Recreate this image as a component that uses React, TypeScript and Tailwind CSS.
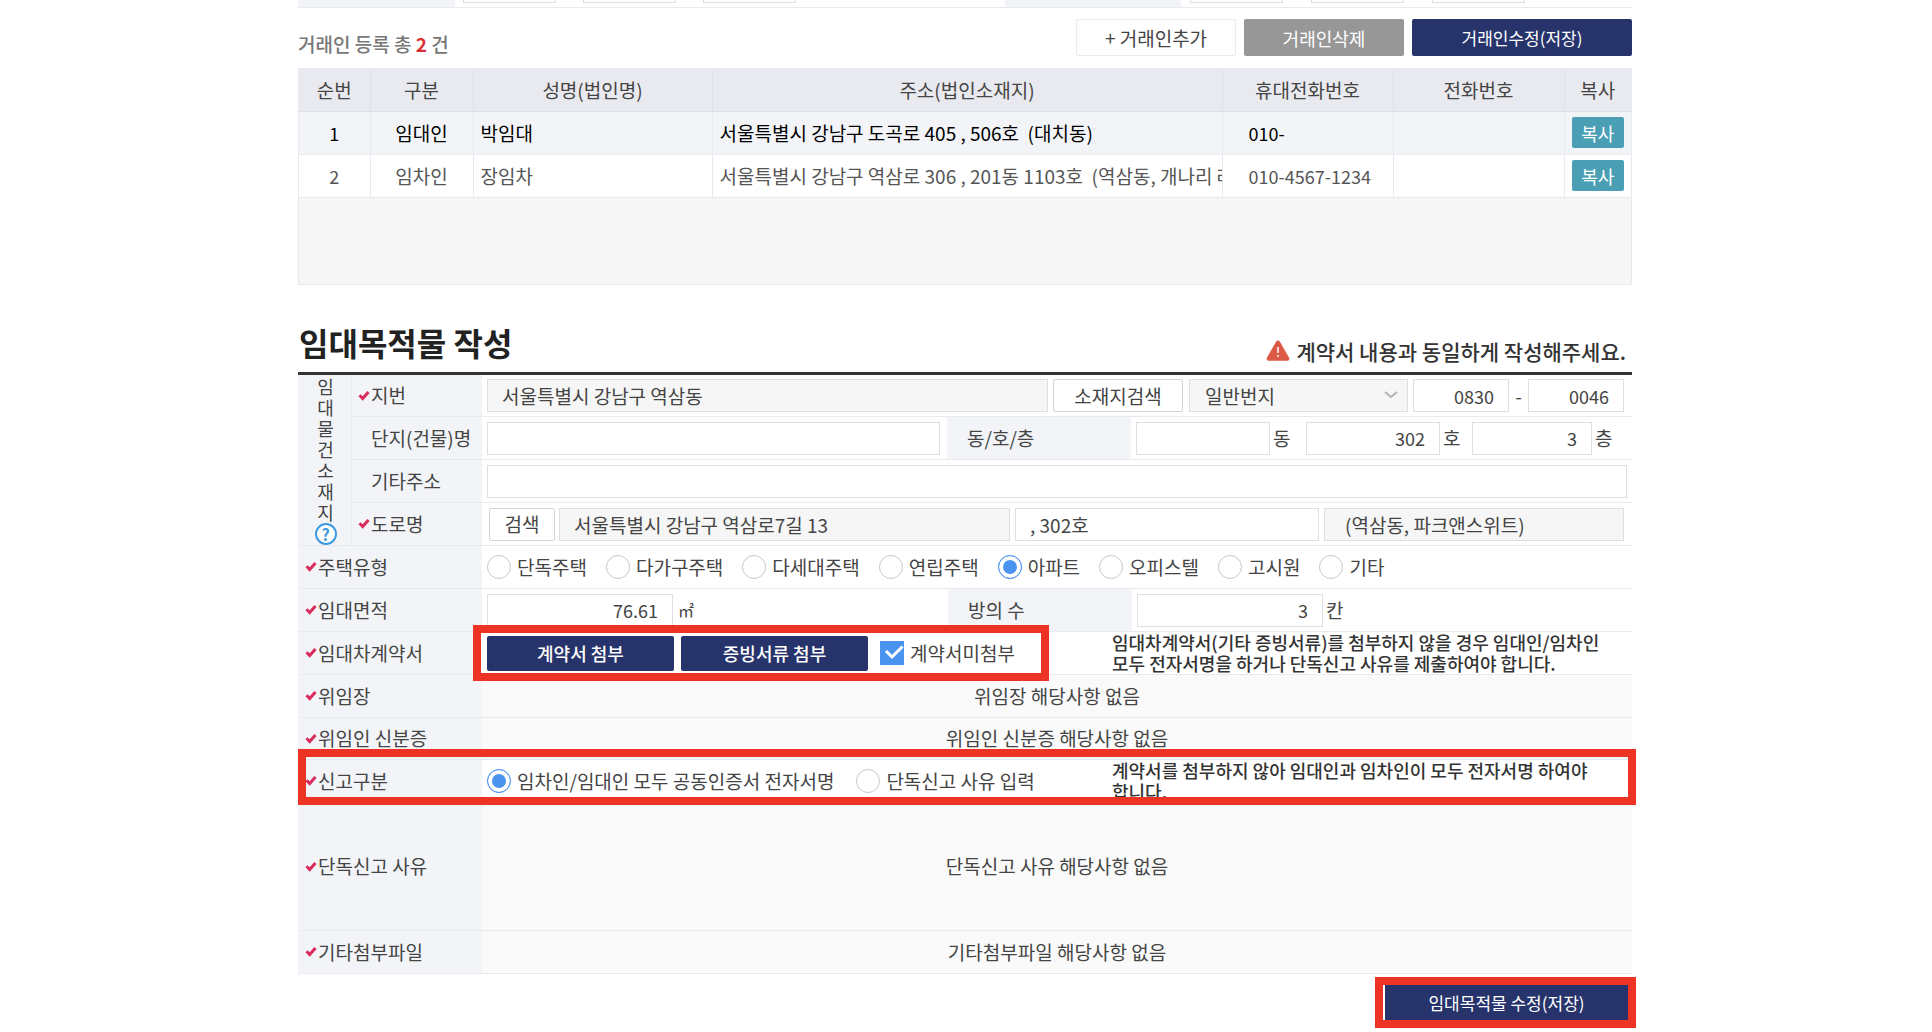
import { useState } from "react";
import type { InputHTMLAttributes, ReactNode } from "react";

interface Party {
  no: number;
  role: string;
  name: string;
  address: string;
  mobile: string;
  phone: string;
}

const parties: Party[] = [
  {
    no: 1,
    role: "임대인",
    name: "박임대",
    address: "서울특별시 강남구 도곡로 405 , 506호  (대치동)",
    mobile: "010-",
    phone: "",
  },
  {
    no: 2,
    role: "임차인",
    name: "장임차",
    address: "서울특별시 강남구 역삼로 306 , 201동 1103호  (역삼동, 개나리 래미안)",
    mobile: "010-4567-1234",
    phone: "",
  },
];

const houseTypes = [
  "단독주택",
  "다가구주택",
  "다세대주택",
  "연립주택",
  "아파트",
  "오피스텔",
  "고시원",
  "기타",
];

const Check = () => (
  <svg viewBox="0 0 12 11" className="h-[11px] w-3 shrink-0" aria-hidden="true">
    <path
      d="M1.5 5.2 4.7 8.5 10.5 2"
      fill="none"
      stroke="#d92b5c"
      strokeWidth="3"
    />
  </svg>
);

const Box = ({
  className = "",
  ...rest
}: InputHTMLAttributes<HTMLInputElement>) => (
  <input
    type="text"
    className={`h-[33px] min-w-0 border border-[#dfdfdf] px-3.5 outline-none ${
      rest.readOnly ? "bg-[#f6f6f6]" : "bg-white"
    } ${className}`}
    {...rest}
  />
);

interface RowProps {
  label: string;
  htmlFor?: string;
  required?: boolean;
  inner?: boolean;
  height?: string;
  muted?: boolean;
  children: ReactNode;
}

const Row = ({
  label,
  htmlFor,
  required = true,
  inner = false,
  height = "h-[43px]",
  muted = false,
  children,
}: RowProps) => (
  <div className={`flex border-b border-[#e9eaef] ${height}`}>
    <div
      className={`flex shrink-0 items-center gap-px bg-[#f2f4f8] pb-px ${
        inner ? "w-[130px] pl-1.5" : "w-[184px] pl-[7px]"
      }`}
    >
      {required ? <Check /> : <span className="w-3 shrink-0" />}
      <label htmlFor={htmlFor} className="whitespace-nowrap">
        {label}
      </label>
    </div>
    <div
      className={`flex min-w-0 flex-1 items-center pl-[5px] ${
        muted ? "bg-[#fafafa] pb-px" : "bg-white"
      }`}
    >
      {children}
    </div>
  </div>
);

const Empty = ({ text }: { text: string }) => (
  <p className="flex-1 pr-[5px] text-center">{text}</p>
);

const SubLabel = ({ text, htmlFor }: { text: string; htmlFor: string }) => (
  <label
    htmlFor={htmlFor}
    className="flex w-[184px] shrink-0 items-center self-stretch bg-[#f2f4f8] pl-5"
  >
    {text}
  </label>
);

interface RadioProps {
  name: string;
  label: string;
  checked: boolean;
  onChange: () => void;
}

const Radio = ({ name, label, checked, onChange }: RadioProps) => (
  <label className="flex items-center gap-1.5 whitespace-nowrap">
    <input
      type="radio"
      name={name}
      checked={checked}
      onChange={onChange}
      className="size-6 shrink-0 appearance-none rounded-full border border-[#c8c8c8] bg-white checked:border-[#4a94f0] checked:bg-[#4a94f0] checked:shadow-[inset_0_0_0_4px_white]"
    />
    {label}
  </label>
);

const TopRow = () => (
  <div className="flex h-2 items-start border-b border-[#e9eaef]">
    <div className="h-[7px] w-[157px] bg-[#f2f4f8]" />
    <div className="flex flex-1 gap-[27px] pl-2">
      <div className="h-[3px] w-[93px] border border-t-0 border-[#dfdfdf]" />
      <div className="h-[3px] w-[93px] border border-t-0 border-[#dfdfdf]" />
      <div className="h-[3px] w-[93px] border border-t-0 border-[#dfdfdf]" />
    </div>
    <div className="h-[7px] w-[176px] bg-[#f2f4f8]" />
    <div className="flex w-[451px] gap-7 pl-[9px]">
      <div className="h-[3px] w-[93px] border border-t-0 border-[#dfdfdf]" />
      <div className="h-[3px] w-[93px] border border-t-0 border-[#dfdfdf]" />
      <div className="h-[3px] w-[93px] border border-t-0 border-[#dfdfdf]" />
    </div>
  </div>
);

const PartyTable = () => (
  <div className="mt-3 h-[217px] border border-[#e9eaef] bg-[#f6f6f6]">
    <table className="w-full table-fixed border-collapse">
      <colgroup>
        <col className="w-[71px]" />
        <col className="w-[103px]" />
        <col className="w-[239px]" />
        <col />
        <col className="w-[171px]" />
        <col className="w-[171px]" />
        <col className="w-[67px]" />
      </colgroup>
      <thead>
        <tr className="h-[42px] bg-[#e9eaef] text-[#444] *:border-r *:border-b *:border-[#dfe0e6] *:font-normal *:last:border-r-0">
          <th>순번</th>
          <th>구분</th>
          <th>성명(법인명)</th>
          <th>주소(법인소재지)</th>
          <th>휴대전화번호</th>
          <th>전화번호</th>
          <th>복사</th>
        </tr>
      </thead>
      <tbody>
        {parties.map((party) => (
          <tr
            key={party.no}
            className="h-[43px] bg-white text-[#555] *:border-r *:border-b *:border-[#e9eaef] first:bg-[#f2f4f8] first:text-black *:last:border-r-0"
          >
            <td className="text-center text-lg">{party.no}</td>
            <td className="text-center">{party.role}</td>
            <td className="pl-[7px]">{party.name}</td>
            <td className="overflow-hidden pl-[7px] whitespace-pre">
              {party.address}
            </td>
            <td className="pl-[26px] text-lg">{party.mobile}</td>
            <td>{party.phone}</td>
            <td className="text-center">
              <button className="h-[31px] w-[52px] rounded-xs bg-[#4a9fb5] align-middle text-lg text-white">
                복사
              </button>
            </td>
          </tr>
        ))}
      </tbody>
    </table>
  </div>
);

const App = () => {
  const [houseType, setHouseType] = useState("아파트");
  const [reportType, setReportType] = useState("both");
  const [noContract, setNoContract] = useState(true);

  return (
    <div className="overflow-hidden bg-white pr-0.5 font-['Noto_Sans_CJK_KR',sans-serif] text-[19px] leading-6 text-[#444]">
      <div className="mx-auto w-full max-w-[1334px]">
        <TopRow />

        <div className="mt-[11px] flex items-center gap-2">
          <p className="flex-1 pt-3 font-medium text-[#777]">
            거래인 등록 총 <strong className="text-[#dc2f35]">2</strong> 건
          </p>
          <button className="h-[37px] w-[160px] rounded-xs border border-[#e9eaef]">
            + 거래인추가
          </button>
          <button className="h-[37px] w-[160px] rounded-xs bg-[#979797] text-lg text-white">
            거래인삭제
          </button>
          <button className="h-[37px] w-[220px] rounded-xs bg-[#26346b] text-[17px] text-white">
            거래인수정(저장)
          </button>
        </div>

        <PartyTable />

        <div className="mt-[34px] flex h-[53px] justify-between pr-1.5 pl-px">
          <h2 className="text-[32px] leading-[46px] font-bold text-[#222]">
            임대목적물 작성
          </h2>
          <p className="flex items-center gap-1.5 pt-2.5 text-[21px] font-medium text-[#333]">
            <svg viewBox="0 0 24 21" className="h-[21px] w-6" aria-hidden="true">
              <path
                d="M10.2 1.4a2.1 2.1 0 0 1 3.6 0l9.3 16.4a2 2 0 0 1-1.8 3H2.7a2 2 0 0 1-1.8-3z"
                fill="#dc5a46"
              />
              <path d="M12 7v6M12 15v2" stroke="white" strokeWidth="1.5" />
            </svg>
            계약서 내용과 동일하게 작성해주세요.
          </p>
        </div>

        <form
          className="border-t-3 border-[#333]"
          onSubmit={(e) => e.preventDefault()}
        >
          <div className="flex">
            <div className="flex w-[54px] shrink-0 flex-col items-center border-r border-b border-[#e9eaef] bg-[#f2f4f8] pt-px pl-0.5">
              <span className="w-[18px] text-center text-lg leading-[21px] break-all">
                임대물건소재지
              </span>
              <button
                type="button"
                aria-label="도움말"
                className="size-[22px] rounded-full border-2 border-[#3f9ae0] bg-white text-base leading-[18px] font-bold text-[#3f9ae0]"
              >
                ?
              </button>
            </div>
            <div className="min-w-0 flex-1">
              <Row inner label="지번" htmlFor="lot" height="h-[42px]">
                <Box
                  id="lot"
                  readOnly
                  className="flex-1"
                  defaultValue="서울특별시 강남구 역삼동"
                />
                <button
                  type="button"
                  className="ml-[5px] h-[33px] w-[130px] rounded-xs border border-[#d4d4d4]"
                >
                  소재지검색
                </button>
                <div className="relative ml-1.5 w-[219px]">
                  <select
                    aria-label="번지 구분"
                    className="block h-[33px] w-full appearance-none border border-[#dfdfdf] bg-[#f6f6f6] px-[15px]"
                  >
                    <option>일반번지</option>
                    <option>산</option>
                  </select>
                  <svg
                    viewBox="0 0 14 8"
                    className="pointer-events-none absolute top-3 right-2.5 h-2 w-3.5"
                    aria-hidden="true"
                  >
                    <path
                      d="m1 1 6 5 6-5"
                      fill="none"
                      stroke="#b4b4b4"
                      strokeWidth="2"
                    />
                  </svg>
                </div>
                <Box
                  aria-label="본번"
                  className="ml-[5px] w-[96px] text-right text-lg"
                  defaultValue="0830"
                />
                <span className="w-[19px] text-center">-</span>
                <Box
                  aria-label="부번"
                  className="mr-2 w-[96px] text-right text-lg"
                  defaultValue="0046"
                />
              </Row>
              <Row inner required={false} label="단지(건물)명" htmlFor="building">
                <Box id="building" className="mr-[7px] flex-1" />
                <SubLabel text="동/호/층" htmlFor="dong" />
                <Box id="dong" className="ml-[5px] w-[134px]" />
                <span className="w-9 pl-[3px]">동</span>
                <Box
                  aria-label="호"
                  className="w-[134px] text-right text-lg"
                  defaultValue="302"
                />
                <span className="w-8 pl-[3px]">호</span>
                <Box
                  aria-label="층"
                  className="w-[120px] text-right text-lg"
                  defaultValue="3"
                />
                <span className="w-10 pl-[3px]">층</span>
              </Row>
              <Row inner required={false} label="기타주소" htmlFor="etc">
                <Box id="etc" className="mr-[5px] flex-1" />
              </Row>
              <Row inner label="도로명" htmlFor="road">
                <button
                  type="button"
                  className="ml-0.5 h-[33px] w-[66px] rounded-xs border border-[#d4d4d4]"
                >
                  검색
                </button>
                <Box
                  id="road"
                  readOnly
                  className="ml-1 flex-1"
                  defaultValue="서울특별시 강남구 역삼로7길 13"
                />
                <Box
                  aria-label="상세주소"
                  className="ml-[5px] w-[304px]"
                  defaultValue=", 302호"
                />
                <Box
                  aria-label="참고항목"
                  readOnly
                  className="mr-2 ml-[5px] w-[300px] pl-5"
                  defaultValue="(역삼동, 파크앤스위트)"
                />
              </Row>
            </div>
          </div>

          <Row label="주택유형">
            <div className="flex gap-[19px]">
              {houseTypes.map((type) => (
                <Radio
                  key={type}
                  name="houseType"
                  label={type}
                  checked={houseType === type}
                  onChange={() => setHouseType(type)}
                />
              ))}
            </div>
          </Row>
          <Row label="임대면적" htmlFor="area">
            <Box
              id="area"
              className="w-[186px] text-right text-lg"
              defaultValue="76.61"
            />
            <span className="flex-1 pl-[5px] text-base">㎡</span>
            <SubLabel text="방의 수" htmlFor="rooms" />
            <Box
              id="rooms"
              className="ml-[5px] w-[186px] text-right text-lg"
              defaultValue="3"
            />
            <span className="w-[309px] pl-[3px]">칸</span>
          </Row>
          <Row label="임대차계약서">
            <div className="relative z-10 -ml-3.5 flex h-14 w-[576px] shrink-0 items-center border-8 border-[#ed3424] bg-white pl-1.5">
              <button
                type="button"
                className="h-[35px] w-[187px] rounded-xs bg-[#26346b] text-lg font-medium text-white"
              >
                계약서 첨부
              </button>
              <button
                type="button"
                className="ml-[7px] h-[35px] w-[187px] rounded-xs bg-[#26346b] text-lg font-medium text-white"
              >
                증빙서류 첨부
              </button>
              <label className="ml-3 flex items-center gap-1.5">
                <span className="grid size-6 *:[grid-area:1/1]">
                  <input
                    type="checkbox"
                    checked={noContract}
                    onChange={() => setNoContract(!noContract)}
                    className="size-6 appearance-none border border-[#c8c8c8] checked:border-[#4a94f0] checked:bg-[#4a94f0]"
                  />
                  <svg
                    viewBox="0 0 24 24"
                    className="pointer-events-none size-6"
                    aria-hidden="true"
                  >
                    <path
                      d="m6 10 6 6L22.5 5.5"
                      fill="none"
                      stroke="white"
                      strokeWidth="3"
                    />
                  </svg>
                </span>
                계약서미첨부
              </label>
            </div>
            <p className="ml-[63px] w-[490px] text-lg leading-[21px] font-medium text-[#333]">
              임대차계약서(기타 증빙서류)를 첨부하지 않을 경우 임대인/임차인
              <br />
              모두 전자서명을 하거나 단독신고 사유를 제출하여야 합니다.
            </p>
          </Row>
          <Row label="위임장" muted>
            <Empty text="위임장 해당사항 없음" />
          </Row>
          <Row label="위임인 신분증" height="h-[42px]" muted>
            <Empty text="위임인 신분증 해당사항 없음" />
          </Row>
          <div className="relative">
            <Row label="신고구분">
              <div className="flex w-[625px] shrink-0 gap-[22px]">
                <Radio
                  name="reportType"
                  label="임차인/임대인 모두 공동인증서 전자서명"
                  checked={reportType === "both"}
                  onChange={() => setReportType("both")}
                />
                <Radio
                  name="reportType"
                  label="단독신고 사유 입력"
                  checked={reportType === "single"}
                  onChange={() => setReportType("single")}
                />
              </div>
              <p className="h-[42px] w-[490px] overflow-hidden text-lg leading-[21px] font-medium text-[#333]">
                계약서를 첨부하지 않아 임대인과 임차인이 모두 전자서명 하여야
                <br />
                합니다.
              </p>
            </Row>
            <div className="pointer-events-none absolute -top-[11px] -right-1 -bottom-0.5 left-0 border-8 border-[#ed3424]" />
          </div>
          <Row label="단독신고 사유" height="h-32" muted>
            <Empty text="단독신고 사유 해당사항 없음" />
          </Row>
          <Row label="기타첨부파일" muted>
            <Empty text="기타첨부파일 해당사항 없음" />
          </Row>

          <div className="-mr-1 flex justify-end pt-[3px] pb-1">
            <div className="w-[261px] border-8 border-[#ed3424] bg-white pl-0.5">
              <button
                type="submit"
                className="block h-[35px] w-full bg-[#26346b] text-[17px] text-white"
              >
                임대목적물 수정(저장)
              </button>
            </div>
          </div>
        </form>
      </div>
    </div>
  );
};

export default App;
